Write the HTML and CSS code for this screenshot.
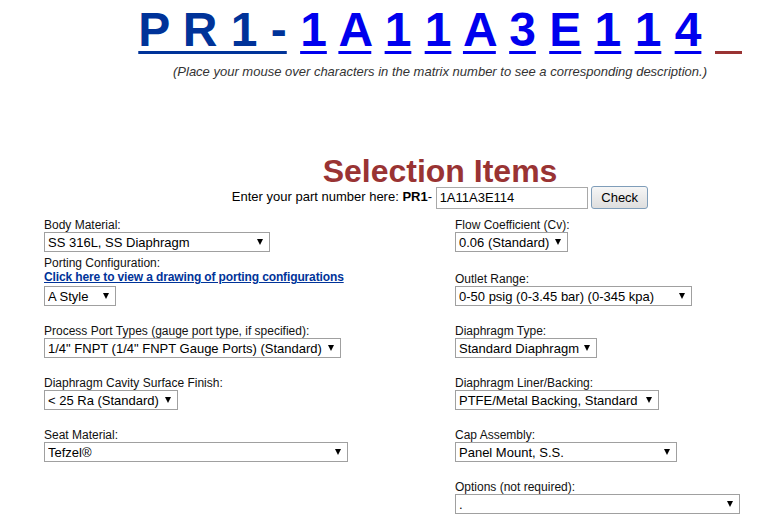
FILE: index.html
```html
<!DOCTYPE html>
<html lang="en">
<head>
  <meta charset="UTF-8" />
  <title>PR1 Matrix Selection</title>
  <link rel="stylesheet" href="styles.css">
</head>
<body>
  <div class="top">
    <div class="matrix">
      <a href="#" class="series">P R 1 -</a>
      <a href="#">1</a>
      <a href="#">A</a>
      <a href="#">1</a>
      <a href="#">1</a>
      <a href="#">A</a>
      <a href="#">3</a>
      <a href="#">E</a>
      <a href="#">1</a>
      <a href="#">1</a>
      <a href="#">4</a>
      <span class="blank"></span>
    </div>
    <p class="hint">(Place your mouse over characters in the matrix number to see a corresponding description.)</p>

    <h2 class="section-title">Selection Items</h2>
    <form class="part-row" onsubmit="return false;">
      Enter your part number here: <b>PR1</b>- <input type="text" class="part-input" value="1A11A3E114"> <button class="check-btn">Check</button>
    </form>
  </div>

  <div class="options-grid">
    <!-- row 1 -->
    <div class="field">
      <label>Body Material:</label>
      <span class="sel"><select style="width: 226px"><option>SS 316L, SS Diaphragm</option></select></span>
    </div>
    <div class="field">
      <label>Flow Coefficient (Cv):</label>
      <span class="sel"><select style="width: 113px"><option>0.06 (Standard)</option></select></span>
    </div>

    <!-- row 2 -->
    <div class="field">
      <label>Porting Configuration:</label>
      <a href="#" class="drawing-link">Click here to view a drawing of porting configurations</a>
      <span class="sel"><select style="width: 72px"><option>A Style</option></select></span>
    </div>
    <div class="field">
      <label>Outlet Range:</label>
      <span class="sel"><select style="width: 237px"><option>0-50 psig (0-3.45 bar) (0-345 kpa)</option></select></span>
    </div>

    <!-- row 3 -->
    <div class="field">
      <label>Process Port Types (gauge port type, if specified):</label>
      <span class="sel"><select style="width: 297px"><option>1/4" FNPT (1/4" FNPT Gauge Ports) (Standard)</option></select></span>
    </div>
    <div class="field">
      <label>Diaphragm Type:</label>
      <span class="sel"><select style="width: 142px"><option>Standard Diaphragm</option></select></span>
    </div>

    <!-- row 4 -->
    <div class="field">
      <label>Diaphragm Cavity Surface Finish:</label>
      <span class="sel"><select style="width: 134px"><option>&lt; 25 Ra (Standard)</option></select></span>
    </div>
    <div class="field">
      <label>Diaphragm Liner/Backing:</label>
      <span class="sel"><select style="width: 204px"><option>PTFE/Metal Backing, Standard</option></select></span>
    </div>

    <!-- row 5 -->
    <div class="field">
      <label>Seat Material:</label>
      <span class="sel"><select style="width: 304px"><option>Tefzel®</option></select></span>
    </div>
    <div class="field">
      <label>Cap Assembly:</label>
      <span class="sel"><select style="width: 222px"><option>Panel Mount, S.S.</option></select></span>
    </div>

    <!-- row 6 -->
    <div class="field"></div>
    <div class="field">
      <label>Options (not required):</label>
      <span class="sel"><select style="width: 285px"><option>.</option></select></span>
    </div>
  </div>
</body>
</html>
```

FILE: styles.css
```css
body {
  margin: 0;
  font-family: "Liberation Sans", Arial, sans-serif;
  color: #000;
  background: #fff;
}

.top {
  padding-left: 102px;
  text-align: center;
}

.matrix {
  padding-top: 5px;
  font-size: 48px;
  font-weight: bold;
  line-height: 50px;
  white-space: nowrap;
}

.matrix a {
  color: #0000ee;
  text-decoration: underline;
  text-decoration-thickness: 3px;
  text-underline-offset: 5px;
}

.matrix a.series {
  color: #003399;
}

.matrix .blank {
  display: inline-block;
  width: 27px;
  height: 3px;
  background: #993333;
  vertical-align: -8px;
}

.hint {
  margin: 9px 0 0;
  font-size: 13px;
  font-style: italic;
  color: #333;
}

.section-title {
  margin: 78px 0 0;
  font-size: 32px;
  line-height: 28px;
  color: #993333;
}

.part-row {
  margin: 0;
  font-size: 13px;
  line-height: 24px;
}

.part-input {
  width: 152px;
  height: 22px;
  box-sizing: border-box;
  padding: 0 3px;
  border: 1px solid #a9a9a9;
  font-family: inherit;
  font-size: 13px;
  vertical-align: middle;
}

.check-btn {
  height: 23px;
  padding: 0 9px;
  border: 1px solid #7f9db9;
  border-radius: 3px;
  background: linear-gradient(#f6f6f6, #dedede);
  font-family: inherit;
  font-size: 13px;
  color: #000;
  vertical-align: middle;
}

.options-grid {
  display: grid;
  grid-template-columns: 411px auto;
  grid-template-rows: 34px 54px 52px 52px 52px 52px;
  align-items: end;
  margin: 9px 0 0 44px;
}

.field label {
  display: block;
  font-size: 12px;
  line-height: 14px;
  color: #111;
}

.drawing-link {
  display: block;
  font-size: 12px;
  font-weight: bold;
  line-height: 15px;
  letter-spacing: -0.13px;
  color: #003399;
  margin-bottom: 1px;
}

.sel {
  position: relative;
  display: inline-block;
  vertical-align: top;
}

.sel select {
  appearance: none;
  -webkit-appearance: none;
  display: block;
  height: 20px;
  box-sizing: border-box;
  padding: 0 3px;
  border: 1px solid #a0a0a0;
  border-radius: 0;
  background: #fff;
  font-family: inherit;
  font-size: 13px;
  color: #000;
}

.sel::after {
  content: "";
  position: absolute;
  right: 7px;
  top: 7px;
  border-style: solid;
  border-width: 6px 3px 0;
  border-color: #000 transparent transparent;
  pointer-events: none;
}
```
